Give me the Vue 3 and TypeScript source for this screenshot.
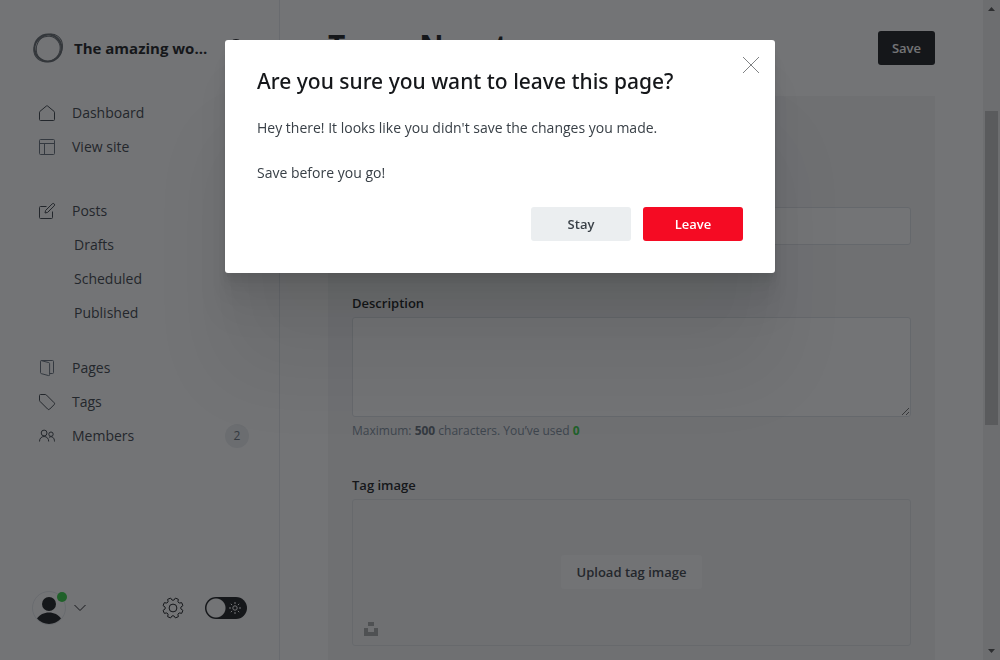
<script setup lang="ts">
import { computed, ref } from 'vue'

interface NavItem {
  label: string
  icon?: string
  sub?: boolean
  count?: number
}

const groups: NavItem[][] = [
  [
    { label: 'Dashboard', icon: 'home' },
    { label: 'View site', icon: 'layout' },
  ],
  [
    { label: 'Posts', icon: 'edit' },
    { label: 'Drafts', sub: true },
    { label: 'Scheduled', sub: true },
    { label: 'Published', sub: true },
  ],
  [
    { label: 'Pages', icon: 'pages' },
    { label: 'Tags', icon: 'tag' },
    { label: 'Members', icon: 'members', count: 2 },
  ],
]

const icons: Record<string, string[]> = {
  home: ['M.5 7.2V14.5a1 1 0 0 0 1 1h13a1 1 0 0 0 1-1V7.2a1 1 0 0 0-.4-.8L8.6 1a1 1 0 0 0-1.2 0L.9 6.4a1 1 0 0 0-.4.8z'],
  layout: ['M1.5.5h13a1 1 0 0 1 1 1v13a1 1 0 0 1-1 1h-13a1 1 0 0 1-1-1v-13a1 1 0 0 1 1-1z', 'M.5 4.5h15', 'M5.5 4.5v11'],
  edit: ['M7.5 3.5h-6a1 1 0 0 0-1 1v10a1 1 0 0 0 1 1h11a1 1 0 0 0 1-1v-6', 'M6 10l.6-2.6L13.2.9a1.4 1.4 0 0 1 2 2L8.6 9.4z'],
  pages: ['M1.5 1.3v11.4a1 1 0 0 0 .7.9l7.400 2a.8.8 0 0 0 1-.8V3.600a1 1 0 0 0-.8-1L2.100.6', 'M1.5 1.400a.9.9 0 0 1 .9-.9h11.200a.9.9 0 0 1 .9.9v11.200a.9.9 0 0 1-.9.9h-3'],
  tag: ['M.5 1.5v4.6a2 2 0 0 0 .6 1.4l7.6 7.6a1.4 1.4 0 0 0 2 0l4.4-4.400a1.4 1.4 0 0 0 0-2L7.5 1.1A2 2 0 0 0 6.100.5H1.5a1 1 0 0 0-1 1z'],
  members: ['M2.2 5a2.9 2.9 0 1 0 5.8 0 2.9 2.9 0 1 0-5.8 0z', 'M.5 13.5c0-3 1.800-5 4.600-5s4.600 2 4.600 5', 'M9.800 6.200a2.200 2.200 0 1 0 4.400 0 2.200 2.200 0 1 0-4.400 0z', 'M10 9.300c3-1.700 5.500.500 5.500 4.200'],
}

// Eight-toothed cog outline around (11, 11)
const cog = (() => {
  const corners: string[] = []
  for (let i = 0; i < 8; i++) {
    const mid = 22.5 + i * 45
    for (const [offset, radius] of [[-16, 7.9], [-9, 10.2], [9, 10.2], [16, 7.9]]) {
      const angle = ((mid + offset) * Math.PI) / 180
      corners.push(`${(11 + radius * Math.cos(angle)).toFixed(2)} ${(11 + radius * Math.sin(angle)).toFixed(2)}`)
    }
  }
  return `M${corners.join('L')}z`
})()

const description = ref('')
const used = computed(() => description.value.length)
const slug = ref('')
const name = ref('')
const night = ref(false)
const open = ref(true)
</script>

<template>
  <div class="shell">
    <aside class="sidebar">
      <header class="brand">
        <svg class="logo" viewBox="0 0 32 32" aria-hidden="true">
          <ellipse cx="16" cy="16" rx="13.500" ry="13.500" stroke-width="2" />
          <ellipse cx="15" cy="17" rx="13.500" ry="12.500" stroke-width="1" transform="rotate(-35 15 17)" />
          <ellipse cx="17" cy="15" rx="12.500" ry="14.300" stroke-width="1" transform="rotate(35 16 16)" />
        </svg>
        <span class="site">The amazing wo...</span>
        <button class="bare search" aria-label="Search">
          <svg viewBox="0 0 18 18" width="18" height="18"><circle cx="7" cy="7" r="6" stroke-width="2" /><path d="M11.500 11.500l5.500 5.500" stroke-width="2" /></svg>
        </button>
      </header>

      <nav class="nav">
        <ul v-for="(group, i) in groups" :key="i">
          <li v-for="item in group" :key="item.label">
            <a href="#" :class="{ sub: item.sub }">
              <svg v-if="item.icon" class="icon" :class="item.icon" viewBox="0 0 16 16" aria-hidden="true">
                <path v-for="d in icons[item.icon]" :key="d" :d="d" />
              </svg>
              <span>{{ item.label }}</span>
              <span v-if="item.count" class="count">{{ item.count }}</span>
            </a>
          </li>
        </ul>
      </nav>

      <footer class="tools">
        <button class="bare user" aria-label="Account">
          <svg width="36" height="36" viewBox="0 0 36 36">
            <circle class="ring" cx="17" cy="18" r="16.500" />
            <circle class="solid" cx="17" cy="14" r="7" />
            <path class="solid" d="M5 28.600c2.500-3.800 7-6 12-6s9.500 2.200 12 6c-3 3.600-7.300 5.400-12 5.400s-9-1.800-12-5.400z" />
            <circle class="online" cx="30" cy="7" r="5" />
          </svg>
          <svg width="12" height="8" viewBox="0 0 12 8"><path d="M.5 1L6 6.500 11.500 1" /></svg>
        </button>
        <button class="bare gear" aria-label="Settings">
          <svg width="22" height="22" viewBox="0 0 22 22" stroke-linejoin="round">
            <path :d="cog" />
            <circle cx="11" cy="11" r="3.900" />
          </svg>
        </button>
        <label class="toggle">
          <input v-model="night" type="checkbox" aria-label="Night mode" />
          <svg width="12" height="12" viewBox="0 0 12 12" aria-hidden="true">
            <circle cx="6" cy="6" r="2.200" />
            <path d="M6 0v2M6 10v2M0 6h2M10 6h2M1.800 1.800l1.300 1.300M8.900 8.900l1.300 1.300M1.800 10.200l1.300-1.300M8.900 3.100l1.300-1.300" />
          </svg>
        </label>
      </footer>
    </aside>

    <main class="main">
      <header class="top">
        <h1>
          <a href="#">Tags</a>
          <svg width="8" height="12" viewBox="0 0 8 12" aria-hidden="true"><path d="M1 1l5 5-5 5" /></svg>
          <span>New tag</span>
        </h1>
        <button class="btn save">Save</button>
      </header>
      <section class="panel">
        <div class="pair">
          <div class="field">
            <label for="name">Name</label>
            <input id="name" v-model="name" type="text" />
          </div>
          <div class="field">
            <label for="slug">Slug</label>
            <input id="slug" v-model="slug" type="text" />
          </div>
        </div>
        <div class="field">
          <label for="description">Description</label>
          <textarea id="description" v-model="description"></textarea>
          <p class="hint">Maximum: <b>500</b> characters. You’ve used <b class="ok">{{ used }}</b></p>
        </div>
        <div class="field">
          <span class="label">Tag image</span>
          <div class="drop">
            <button class="btn upload">Upload tag image</button>
            <button class="bare unsplash" aria-label="Unsplash">
              <svg width="14" height="14" viewBox="0 0 14 14"><path d="M4 0h6v4H4zM0 6h4v4h6V6h4v8H0z" /></svg>
            </button>
          </div>
        </div>
      </section>
    </main>

    <div class="scrollbar" aria-hidden="true">
      <svg width="7" height="4" viewBox="0 0 7 4"><path d="M0 4L3.500 0 7 4z" /></svg>
      <div class="track"><i class="before"></i><i class="thumb"></i><i class="after"></i></div>
      <svg width="7" height="4" viewBox="0 0 7 4"><path d="M0 0h7L3.500 4z" /></svg>
    </div>

    <div v-if="open" class="overlay">
      <div class="modal" role="dialog" aria-modal="true" aria-labelledby="leave-title">
        <h2 id="leave-title">Are you sure you want to leave this page?</h2>
        <p>Hey there! It looks like you didn't save the changes you made.</p>
        <p>Save before you go!</p>
        <div class="actions">
          <button class="btn stay" @click="open = false">Stay</button>
          <button class="btn leave">Leave</button>
        </div>
        <button class="bare close" aria-label="Close" @click="open = false">
          <svg width="16" height="16" viewBox="0 0 16 16"><path d="M0 0l16 16M16 0L0 16" /></svg>
        </button>
      </div>
    </div>
  </div>
</template>

<style>
body {
  background: #fff;
}
</style>

<style scoped>
.shell,
.shell * {
  box-sizing: border-box;
}
.shell {
  display: flex;
  height: 100vh;
  overflow: hidden;
  color: #15171a;
  font-family: "Open Sans", "Noto Sans", sans-serif;
  font-size: 14px;
  line-height: 20px;
}
svg {
  display: block;
  flex: none;
  fill: none;
  stroke: currentColor;
}
button,
input,
textarea {
  font: inherit;
  color: inherit;
}
.bare {
  padding: 0;
  border: 0;
  background: none;
}
h1,
h2,
p,
ul {
  margin: 0;
  padding: 0;
}
a {
  color: inherit;
  text-decoration: none;
}

.sidebar {
  display: flex;
  flex: none;
  flex-direction: column;
  width: 280px;
  border-right: 1px solid #e5e9ed;
}
.brand {
  display: flex;
  align-items: center;
  height: 96px;
  padding: 0 32px;
}
.logo {
  width: 32px;
  height: 32px;
  margin-right: 10px;
  stroke: #394047;
  opacity: 0.8;
}
.site {
  font-size: 15px;
  font-weight: 700;
  white-space: nowrap;
}
.search {
  margin-left: auto;
}
.nav {
  display: flex;
  flex: 1;
  flex-direction: column;
}
.nav ul {
  list-style: none;
}
.nav ul + ul {
  margin-top: 30px;
}
.nav ul:last-child {
  margin-top: 21px;
}
.nav a {
  display: flex;
  align-items: center;
  height: 34px;
  padding: 0 30px 0 39px;
  color: #394047;
}
.nav .sub {
  padding-left: 74px;
}
.icon {
  width: 16px;
  height: 16px;
  margin-right: 17px;
  overflow: visible;
}
.layout,
.pages {
  color: #626d79;
}
.count {
  width: 24px;
  margin-left: auto;
  border-radius: 12px;
  background: #ebeef0;
  color: #626d79;
  font-size: 12px;
  font-weight: 500;
  line-height: 24px;
  text-align: center;
}
.tools {
  display: flex;
  align-items: center;
  height: 104px;
  padding: 0 32px;
}
.user {
  display: flex;
  align-items: center;
  gap: 6px;
}
.ring {
  stroke: #e5e9ed;
}
.solid {
  fill: #15171a;
  stroke: none;
}
.online {
  fill: #30cf43;
  stroke: none;
}
.gear {
  margin-left: auto;
}
.toggle {
  display: grid;
  align-items: center;
  margin-left: 21px;
}
.toggle input {
  grid-area: 1 / 1;
  width: 42px;
  height: 22px;
  margin: 0;
  border-radius: 11px;
  background: radial-gradient(circle at 11px 11px, #fff 9px, #15171a 10px);
  appearance: none;
}
.toggle svg {
  grid-area: 1 / 1;
  justify-self: end;
  margin-right: 6px;
  color: #fff;
}

.main {
  flex: 1;
  min-width: 0;
  padding: 0 48px;
  overflow: hidden;
}
.top {
  display: flex;
  align-items: center;
  justify-content: space-between;
  height: 96px;
}
h1 {
  display: flex;
  align-items: center;
  gap: 8px;
  margin-bottom: 4px;
  font-size: 30px;
  line-height: 40px;
}
.btn {
  height: 34px;
  padding: 0 14px;
  border: 0;
  border-radius: 3px;
  font-size: 13px;
  font-weight: 600;
}
.save {
  background: #15171a;
  color: #fff;
}
.panel {
  display: flex;
  flex-direction: column;
  gap: 34px;
  padding: 24px;
  background: #f4f5f6;
}
.pair {
  display: grid;
  grid-template-columns: 1fr 1fr;
  gap: 24px;
  padding: 63px 0 14px;
}
.field {
  display: flex;
  flex-direction: column;
  gap: 4px;
}
.field label,
.label {
  font-size: 13px;
  font-weight: 600;
}
.field input,
.field textarea {
  width: 100%;
  height: 38px;
  margin: 0;
  padding: 8px 12px;
  border: 1px solid #dde1e5;
  border-radius: 3px;
  background: #fff;
}
.field textarea {
  display: block;
  height: 100px;
  resize: vertical;
}
.hint {
  color: #7c8b9a;
  font-size: 12px;
}
.hint b {
  color: #626d79;
}
.hint .ok {
  color: #30cf43;
}
.drop {
  position: relative;
  display: flex;
  align-items: center;
  justify-content: center;
  height: 147px;
  padding-bottom: 2px;
  border: 1px solid #e1e4e7;
  border-radius: 3px;
}
.upload {
  padding: 0 16px;
  background: #fcfcfd;
  color: #394047;
}
.unsplash {
  position: absolute;
  bottom: 9px;
  left: 11px;
}
.unsplash path {
  fill: #a6a7a8;
  stroke: none;
}

.scrollbar {
  display: flex;
  flex: none;
  flex-direction: column;
  align-items: center;
  width: 17px;
  padding: 7px 0;
  background: #f1f1f1;
}
.scrollbar path {
  fill: #505050;
  stroke: none;
}
.track {
  display: flex;
  flex: 1;
  flex-direction: column;
  width: 13px;
  margin: 6px 0;
}
.before {
  flex: 94;
}
.thumb {
  flex: 314;
  background: #c1c1c1;
}
.after {
  flex: 218;
}

.overlay {
  position: fixed;
  inset: 0;
  display: flex;
  align-items: flex-start;
  justify-content: center;
  padding: 40px 24px;
  background: rgba(21, 23, 26, 0.6);
}
.modal {
  position: relative;
  display: flex;
  flex-direction: column;
  gap: 23px;
  width: 100%;
  max-width: 550px;
  padding: 28px 32px 32px;
  border-radius: 3px;
  background: #fff;
  box-shadow:
    0 3px 2px rgba(0, 0, 0, 0.02),
    0 7px 5px rgba(0, 0, 0, 0.03),
    0 12px 10px rgba(0, 0, 0, 0.035),
    0 22px 18px rgba(0, 0, 0, 0.04),
    0 42px 33px rgba(0, 0, 0, 0.05),
    0 100px 80px rgba(0, 0, 0, 0.07);
}
h2 {
  font-family: "Noto Sans", "Open Sans", sans-serif;
  font-size: 21px;
  font-weight: 500;
  line-height: 26px;
}
.modal p {
  color: #394047;
  font-size: 14px;
  line-height: 22px;
}
.actions {
  display: flex;
  justify-content: flex-end;
  gap: 12px;
}
.actions .btn {
  width: 100px;
}
.stay {
  background: #ebeef0;
  color: #394047;
}
.leave {
  background: #f50b23;
  color: #fff;
}
.close {
  position: absolute;
  top: 17px;
  right: 16px;
  color: #808284;
}
</style>
